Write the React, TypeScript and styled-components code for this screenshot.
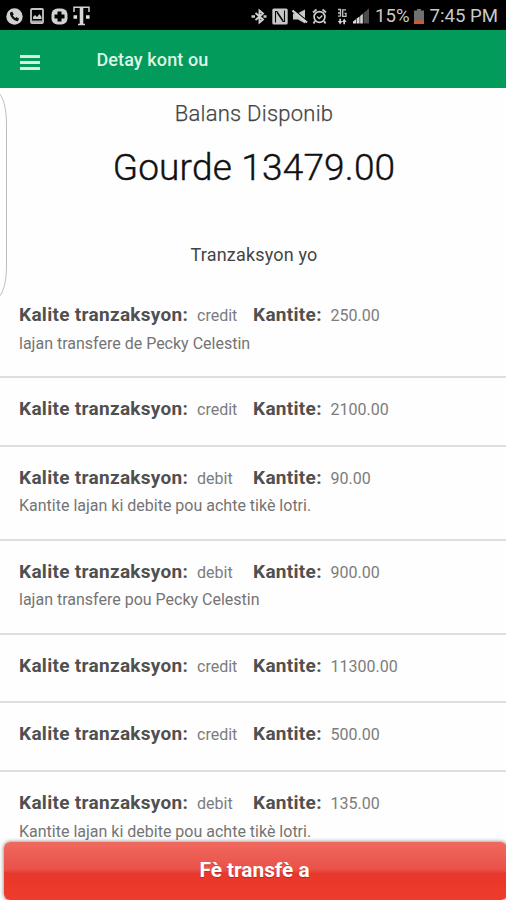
import React from "react";
import styled, { createGlobalStyle } from "styled-components";

const GlobalStyle = createGlobalStyle`
  * { box-sizing: border-box; }
  html, body { margin: 0; padding: 0; background: #fff; overflow: hidden; }
  body { font-family: Roboto, "Liberation Sans", sans-serif; }
`;

const Screen = styled.div`
  position: relative;
  width: 506px;
  height: 900px;
  overflow: hidden;
  background: #fefefe;
`;

const StatusBar = styled.div`
  display: flex;
  align-items: center;
  justify-content: space-between;
  height: 30px;
  padding: 2px 8px 0 6px;
  background: #000;
  color: #c9c9c9;
`;

const IconStrip = styled.div`
  display: flex;
  align-items: center;
`;

const StatusIcon = styled.svg<{ $gap?: number }>`
  display: block;
  flex: none;
  margin-right: ${(p) => p.$gap ?? 0}px;
`;

const StatusText = styled.span<{ $gap?: number }>`
  font-size: 18.6px;
  line-height: 28px;
  margin-right: ${(p) => p.$gap ?? 0}px;
  white-space: nowrap;
`;

const AppBar = styled.header`
  display: flex;
  align-items: center;
  gap: 56.5px;
  height: 58px;
  padding: 0 20px 0 20px;
  background: #029b5b;
`;

const MenuButton = styled.button`
  display: flex;
  flex-direction: column;
  gap: 3px;
  width: 20px;
  margin: 7px 0 0;
  padding: 0;
  border: 0;
  background: none;
`;

const MenuLine = styled.span`
  height: 3px;
  background: #d4f0de;
`;

const AppTitle = styled.h1`
  margin: 1px 0 0;
  font-size: 18px;
  line-height: 22px;
  font-weight: 500;
  letter-spacing: 0.1px;
  color: #dff3e7;
`;

const EdgeHandle = styled.div`
  position: absolute;
  left: -14px;
  top: 92px;
  width: 21px;
  height: 206px;
  border: 1px solid #bcbcbc;
  border-radius: 14px / 42px;
`;

const Summary = styled.section`
  display: flex;
  flex-direction: column;
  align-items: center;
  height: 196.4px;
  padding-left: 2px;
`;

const BalanceLabel = styled.div`
  margin-top: 12px;
  font-size: 22px;
  line-height: 28px;
  font-weight: 300;
  letter-spacing: 0.25px;
  color: #444;
  -webkit-text-stroke: 0.25px #444;
`;

const BalanceValue = styled.div`
  margin-top: 18px;
  font-size: 37px;
  line-height: 44px;
  font-weight: 300;
  letter-spacing: 0.2px;
  color: #111;
  -webkit-text-stroke: 0.4px #111;
`;

const SectionTitle = styled.div`
  margin-top: 53px;
  font-size: 18px;
  line-height: 24px;
  letter-spacing: 0.17px;
  color: #444;
`;

const TransactionList = styled.ul`
  margin: 0;
  padding: 0;
  list-style: none;
`;

const TransactionRow = styled.li<{ $tall: boolean }>`
  height: ${(p) => (p.$tall ? 93.8 : 68.8)}px;
  padding: 18px 19px 0;
  border-bottom: 2px solid #dedede;

  &:last-child {
    border-bottom: 0;
  }
`;

const Fields = styled.div`
  display: grid;
  grid-template-columns: 178px 56px 77.5px auto;
  align-items: baseline;
  line-height: 26px;
  white-space: nowrap;
`;

const FieldLabel = styled.span`
  font-size: 19px;
  font-weight: 700;
  letter-spacing: 0.3px;
  color: #505050;
`;

const FieldValue = styled.span`
  font-size: 16px;
  color: #7c7c7c;
`;

const Description = styled.div`
  margin-top: 3.4px;
  font-size: 16px;
  line-height: 22px;
  color: #747474;
`;

const TransferButton = styled.button`
  position: absolute;
  left: 4px;
  top: 842px;
  width: 503px;
  height: 58px;
  padding: 0 2px 3px 0;
  border: 0;
  border-radius: 6px;
  background: linear-gradient(#f0695e 0, #e95148 48%, #e8382b 54%, #ee3b2b 100%);
  box-shadow: 0 0 4px rgba(0, 0, 0, 0.55);
  font: 700 20.8px/24px Roboto, "Liberation Sans", sans-serif;
  color: #fff;
  text-shadow: 0 1px 1px rgba(100, 0, 0, 0.35);
`;

type Transaction = { kind: string; amount: string; note?: string };

const transactions: Transaction[] = [
  { kind: "credit", amount: "250.00", note: "lajan transfere de Pecky Celestin" },
  { kind: "credit", amount: "2100.00" },
  { kind: "debit", amount: "90.00", note: "Kantite lajan ki debite pou achte tikè lotri." },
  { kind: "debit", amount: "900.00", note: "lajan transfere pou Pecky Celestin" },
  { kind: "credit", amount: "11300.00" },
  { kind: "credit", amount: "500.00" },
  { kind: "debit", amount: "135.00", note: "Kantite lajan ki debite pou achte tikè lotri." },
];

function NotificationIcons() {
  return (
    <IconStrip>
      <StatusIcon $gap={7} width="17" height="17" viewBox="0 0 17 17">
        <circle cx="8.5" cy="8.5" r="8.2" fill="#d2d2d2" />
        <path d="M4.3 4.500l1.800-1 1.700 2.700-1 1.100c.6 1.200 1.400 2 2.600 2.700l1.200-1 2.500 1.800-1 1.900c-.4.500-1 .6-1.800.4C7.400 12.200 4.700 9.200 4 6.200c-.1-.7 0-1.300.3-1.700z" fill="#111" />
      </StatusIcon>
      <StatusIcon $gap={7} width="14" height="16" viewBox="0 0 14 16">
        <rect x="1" y="1" width="12" height="14" rx="1" fill="none" stroke="#c4c4c4" strokeWidth="1.800" />
        <path d="M3 11V9l2-2 2 2 2.500-3L11.500 9v2z" fill="#ccc" />
        <path d="M2 13.500h10" stroke="#aaa" strokeWidth="2" />
      </StatusIcon>
      <StatusIcon $gap={5} width="17" height="17" viewBox="0 0 17 17">
        <rect x="0.500" y="0.500" width="16" height="16" rx="6" fill="#d2d2d2" />
        <path d="M8.500 3.500v10M3.500 8.500h10" stroke="#000" strokeWidth="4" />
      </StatusIcon>
      <StatusIcon width="17" height="20" viewBox="0 0 17 20">
        <path d="M1 6V1.200h15V6M8.500 1v17M5 18.600h7" fill="none" stroke="#d0d0d0" strokeWidth="1.500" />
        <path d="M8.500 1v17.500" stroke="#d8d8d8" strokeWidth="3.600" />
        <path d="M0.500 9.200h3.600v3.500H.500zM13 9.200h3.600v3.500H13z" fill="#e0e0e0" />
      </StatusIcon>
    </IconStrip>
  );
}

function SystemIcons() {
  return (
    <IconStrip>
      <StatusIcon $gap={5} width="16" height="17" viewBox="0 0 16 17">
        <path d="M4.500 5l7.500 6.500-3.500 3v-12l3.500 3L4.500 12" fill="none" stroke="#d0d0d0" strokeWidth="1.900" />
        <path d="M.500 8.500h3.500M12.500 8.500h3" stroke="#ccc" strokeWidth="2.400" />
      </StatusIcon>
      <StatusIcon $gap={4} width="16" height="17" viewBox="0 0 16 17">
        <rect x="0.300" y="0.500" width="15.400" height="16" rx="1.500" fill="#c7c7c7" />
        <path d="M3.500 14.500V3.500h1.500l6 9M12.500 2.500v11h-1.500l-6-9" fill="none" stroke="#080808" strokeWidth="1.100" />
      </StatusIcon>
      <StatusIcon $gap={4} width="16" height="17" viewBox="0 0 16 17">
        <path d="M1 5.500h4.500L13 1.500v14L6 11.500H1z" fill="#c8c8c8" />
        <path d="M1.500 1.500L15 13" stroke="#000" strokeWidth="1.500" />
        <path d="M.500 2.500L15 14.500" stroke="#d5d5d5" strokeWidth="2.100" />
      </StatusIcon>
      <StatusIcon $gap={10} width="15" height="17" viewBox="0 0 15 17">
        <circle cx="7.500" cy="9" r="5.400" fill="none" stroke="#cfcfcf" strokeWidth="1.700" />
        <path d="M1 4.500L4.500 1.500M10.500 1.500L14 4.500M3 13l-1.500 2.500M12 13l1.500 2.500" stroke="#c6c6c6" strokeWidth="1.900" />
        <path d="M5 8.500l2.300 2 3-3" fill="none" stroke="#ccc" strokeWidth="1.300" />
      </StatusIcon>
      <StatusIcon $gap={6} width="10" height="17" viewBox="0 0 10 17">
        <path d="M1 1.500h2.500v7M1 5h2.500M1 8.200h2.500M9 1.800H5.700v6.500H9V5.300H7.500" fill="none" stroke="#c2c2c2" strokeWidth="1.300" />
        <path d="M3.200 16.500L.800 13h1.500v-2.200H4V13h1.500zM7.200 10.500L9.600 14H8v2.200H6.300V14H5z" fill="#d0d0d0" />
      </StatusIcon>
      <StatusIcon $gap={6} width="16" height="16" viewBox="0 0 16 16">
        <path d="M0 15.500v-2l3-2.200v4.200zM3.600 15.500v-5l3-2v7zM7.200 15.500V8l2.600-2.200v9.700z" fill="#dadada" />
        <path d="M10.500 15.500V5L16 .500v15z" fill="#4c4c4c" />
      </StatusIcon>
      <StatusText $gap={4}>15%</StatusText>
      <StatusIcon $gap={6} width="10" height="15" viewBox="0 0 10 15">
        <path d="M3 0h4v1.500h3V12H0V1.500h3z" fill="#707070" />
        <path d="M0 11.500h10V15H0z" fill="#d4572e" />
      </StatusIcon>
      <StatusText>7:45 PM</StatusText>
    </IconStrip>
  );
}

export default function App() {
  return (
    <>
      <GlobalStyle />
      <Screen>
        <StatusBar>
          <NotificationIcons />
          <SystemIcons />
        </StatusBar>
        <AppBar>
          <MenuButton aria-label="Menu">
            <MenuLine />
            <MenuLine />
            <MenuLine />
          </MenuButton>
          <AppTitle>Detay kont ou</AppTitle>
        </AppBar>
        <Summary>
          <BalanceLabel>Balans Disponib</BalanceLabel>
          <BalanceValue>Gourde 13479.00</BalanceValue>
          <SectionTitle>Tranzaksyon yo</SectionTitle>
        </Summary>
        <TransactionList>
          {transactions.map((t, i) => (
            <TransactionRow key={i} $tall={Boolean(t.note)}>
              <Fields>
                <FieldLabel>Kalite tranzaksyon:</FieldLabel>
                <FieldValue>{t.kind}</FieldValue>
                <FieldLabel>Kantite:</FieldLabel>
                <FieldValue>{t.amount}</FieldValue>
              </Fields>
              {t.note && <Description>{t.note}</Description>}
            </TransactionRow>
          ))}
        </TransactionList>
        <EdgeHandle />
        <TransferButton>Fè transfè a</TransferButton>
      </Screen>
    </>
  );
}
